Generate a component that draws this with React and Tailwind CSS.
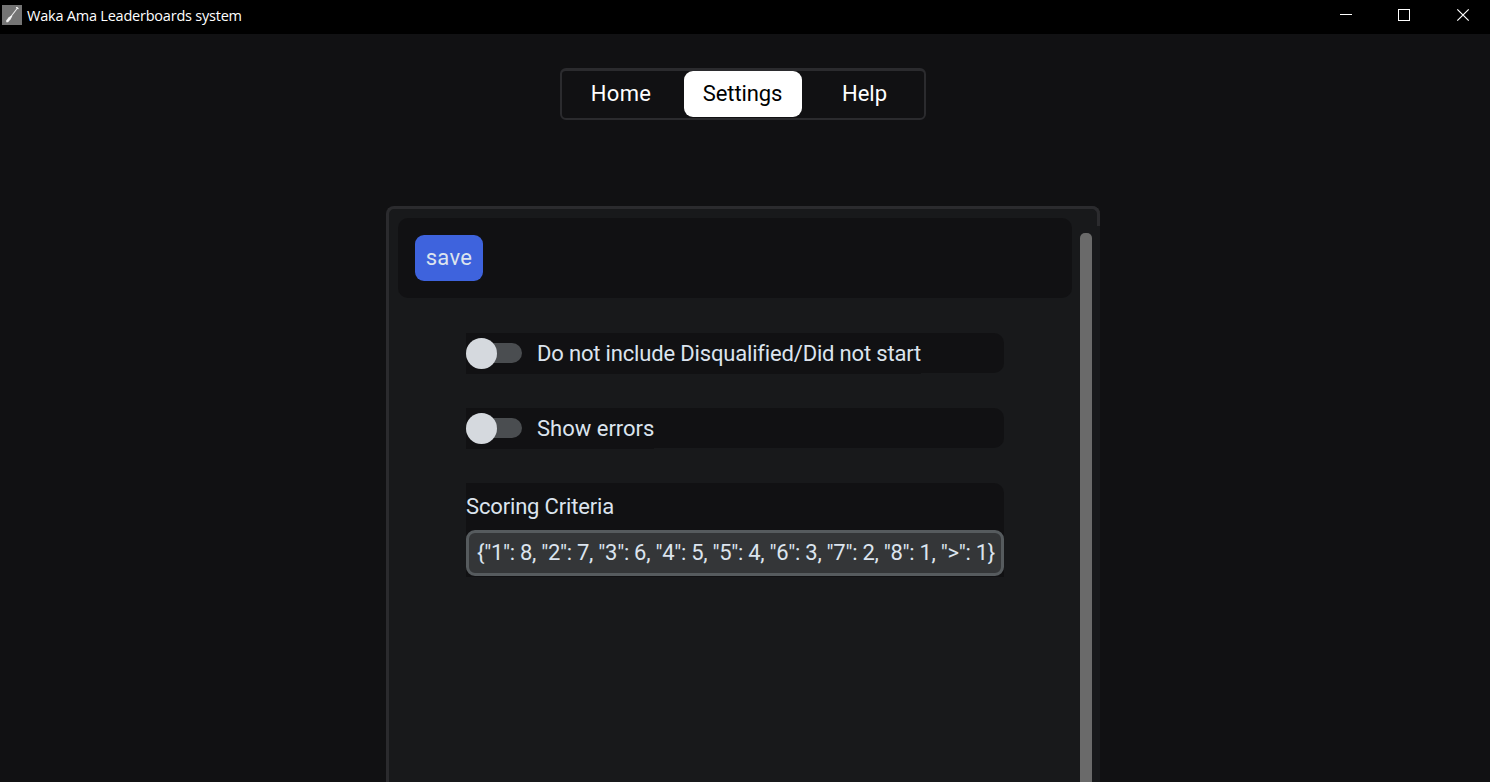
const font = "font-['Roboto',sans-serif]";

function TitleBar() {
  return (
    <header className="flex h-[34px] shrink-0 items-start justify-between bg-black text-white">
      <div className="flex items-start pt-[5px] pl-[2px]">
        <svg className="h-5 w-5" viewBox="0 0 20 20">
          <rect width="20" height="20" fill="#747474" />
          <path d="M15.5 3L9 11.5" stroke="#e8e8e8" strokeWidth="1.2" strokeLinecap="round" />
          <path d="M14.5 2.6L16 3.6" stroke="#f5f5f5" strokeWidth="1.2" strokeLinecap="round" />
          <path d="M9.3 10.5L10.3 11.3L8.5 14.5L6 17.3L4.3 17.3L4.2 15.5L6.5 12.5Z" fill="#f5f5f5" />
        </svg>
        <span className="ml-[5px] pt-px font-['Open_Sans','Noto_Sans',sans-serif] text-[14.5px] leading-5 tracking-[-0.22px] whitespace-nowrap">
          Waka Ama Leaderboards system
        </span>
      </div>
      <div className="flex pt-2 pr-5">
        <svg className="mr-[44px] h-[14px] w-[14px]" viewBox="0 0 14 14" shapeRendering="crispEdges">
          <path d="M1 6.5H13" stroke="#fff" />
        </svg>
        <svg className="mr-[45px] h-[14px] w-[14px]" viewBox="0 0 14 14" shapeRendering="crispEdges">
          <rect x="1.5" y="1.5" width="11" height="11" fill="none" stroke="#fff" />
        </svg>
        <svg className="h-[14px] w-[14px]" viewBox="0 0 14 14">
          <path d="M1.3 1.3L12.7 12.7M12.7 1.3L1.3 12.7" stroke="#fff" strokeWidth="1.2" />
        </svg>
      </div>
    </header>
  );
}

function Tabs() {
  return (
    <nav className="mt-[34px] flex h-[52px] w-[366px] shrink-0 rounded-[6px] border-2 border-t-3 border-[#2b2b2e] text-[22px] text-white">
      <button className="h-[46px] w-[122px] pr-[4px] pb-[2px] tracking-[0.28px]">Home</button>
      <button className="h-[46px] w-[118px] rounded-[9px] bg-white pr-px pb-[2px] tracking-[-0.12px] text-black">Settings</button>
      <button className="h-[46px] w-[122px] pb-[2px] pl-[3px]">Help</button>
    </nav>
  );
}

function SwitchRow({ label }) {
  return (
    <label className="flex h-10 rounded-r-[10px] bg-[#111113]">
      <span className="flex h-[41px] items-center bg-[#111113] pb-px">
        <span className="flex h-5 w-14 items-center rounded-full bg-[#4a4d50]">
          <span className="-ml-[0.5px] h-[31px] w-[31px] shrink-0 rounded-full bg-[#d5d9de]" />
        </span>
        <span className="ml-[15px] pt-[2px] text-[22px] leading-[38px] whitespace-nowrap">{label}</span>
      </span>
    </label>
  );
}

export default function App() {
  return (
    <div className={`flex h-[782px] w-[1490px] flex-col overflow-hidden bg-[#111113] text-[#dce4ee] ${font}`}>
      <TitleBar />
      <main className="flex min-h-0 flex-1 flex-col items-center pr-1">
        <Tabs />
        <section className="relative mt-[86px] flex min-h-0 w-[714px] flex-1 rounded-t-[8px] border-t-3 border-l-3 border-[#2b2b2e] bg-[#18191b]">
          <span className="absolute -top-[3px] right-0 h-5 w-3 rounded-tr-[8px] border-t-3 border-r-3 border-[#2b2b2e]" />
          <div className="ml-[9px] w-[674px] pt-[9px]">
            <div className="flex h-20 items-center rounded-[10px] bg-[#111113] pl-[17px]">
              <button className="h-[46px] w-[68px] rounded-[9px] bg-[#3e63dd] pb-[2px] text-[22px] tracking-[0.3px]">save</button>
            </div>
            <div className="mt-[35px] ml-[68px] flex w-[538px] flex-col gap-[35px]">
              <div className="tracking-[-0.17px]">
                <SwitchRow label="Do not include Disqualified/Did not start" />
              </div>
              <SwitchRow label="Show errors" />
              <div className="h-[94px] rounded-tr-[10px] bg-[#111113]">
                <div className="h-[47px] text-[22px] leading-[47px] tracking-[-0.16px]">Scoring Criteria</div>
                <div className="h-[46px] rounded-[9px] border-3 border-[#565b5e] bg-[#343638] pl-2 text-[22px] leading-[39px] tracking-[-0.29px] whitespace-nowrap">
                  {'{"1": 8, "2": 7, "3": 6, "4": 5, "5": 4, "6": 3, "7": 2, "8": 1, ">": 1}'}
                </div>
              </div>
            </div>
          </div>
          <div className="mt-6 ml-2 w-3 rounded-t-[5px] bg-[#6a6a6a]" />
        </section>
      </main>
    </div>
  );
}
